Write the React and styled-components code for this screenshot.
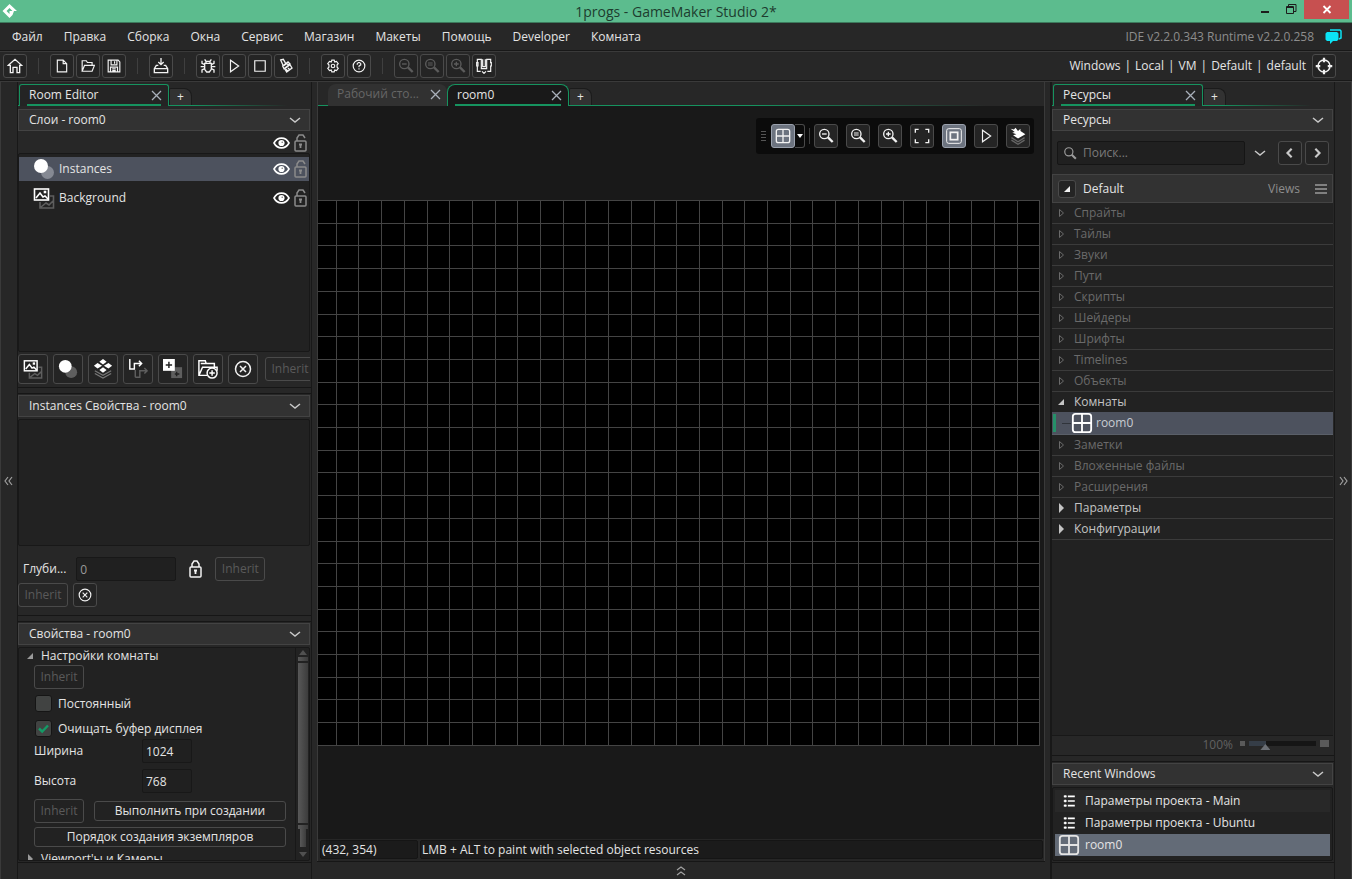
import React, { useState } from "react";
import styled, { createGlobalStyle, css } from "styled-components";

const GlobalStyle = createGlobalStyle`
  * { box-sizing: border-box; }
  html, body, #root { height: 100%; }
  body {
    margin: 0;
    overflow: hidden;
    background: #272727;
    color: #e4e4e4;
    font-family: "Open Sans", "Noto Sans", sans-serif;
    font-size: 12px;
    line-height: 16px;
  }
  button, input { font: inherit; color: inherit; margin: 0; }
  button { padding: 0; background: none; border: 0; }
  ul { margin: 0; padding: 0; list-style: none; }
  a { color: inherit; text-decoration: none; }
`;

const Window = styled.div`
  height: 100vh;
  display: flex;
  flex-direction: column;
`;

/* ---------- title, menu, toolbar ---------- */

const TitleBar = styled.header`
  display: grid;
  grid-template-columns: 1fr auto 1fr;
  height: 23px;
  background: #5cbc8e;
  border-bottom: 1px solid #3c7a5c;
  color: #1d3c2e;
`;
const Logo = styled.div`
  padding: 3px 0 0 2px;
  svg { display: block; }
`;
const WindowTitle = styled.h1`
  margin: 0;
  font-size: 14px;
  font-weight: 400;
  line-height: 23px;
`;
const WindowButtons = styled.div`
  display: flex;
  justify-content: flex-end;
  padding-right: 3px;
`;
const WindowButton = styled.button`
  width: ${(p) => (p.$close ? 45 : 26)}px;
  height: 19px;
  background: ${(p) => (p.$close ? "#c75050" : "transparent")};
  svg { display: block; margin: 0 auto; }
`;

const MenuBar = styled.nav`
  display: flex;
  align-items: center;
  gap: 1px;
  height: 28px;
  padding: 0 10px 0 2px;
  border-bottom: 1px solid #181818;
`;
const MenuItem = styled.button`
  padding: 0 10px;
  height: 26px;
`;
const Spacer = styled.div`
  flex: 1;
`;
const Version = styled.span`
  color: #8d8d8d;
  margin-right: 10px;
`;
const ChatButton = styled.button`
  width: 17px;
  height: 16px;
  svg { display: block; }
`;

const ToolBar = styled.div`
  display: flex;
  align-items: center;
  gap: 2px;
  height: 30px;
  padding: 0 16px 0 3px;
  border-top: 1px solid #3a3a3a;
  border-bottom: 1px solid #181818;
`;
const Divider = styled.span`
  width: 1px;
  height: 16px;
  margin: 0 ${(p) => p.$space ?? 9}px;
  background: #3f3f3f;
`;
const ToolButton = styled.button`
  display: flex;
  align-items: center;
  justify-content: center;
  flex: none;
  width: ${(p) => p.$size || 24}px;
  height: ${(p) => p.$size || 24}px;
  border: 1px solid ${(p) => (p.$on ? "#9aa1ad" : "#4a4a4a")};
  border-radius: 3px;
  background: ${(p) => (p.$on ? "#6c737f" : "#242424")};
  color: ${(p) => (p.disabled ? "#5c5c5c" : "#f2f2f2")};
`;
const Targets = styled.div`
  display: flex;
  gap: 4px;
  margin-right: 4px;
`;

/* ---------- docks ---------- */

const Workspace = styled.main`
  flex: 1;
  min-height: 0;
  display: grid;
  grid-template-columns: 17px 295px minmax(0, 1fr) 284px 17px;
  border-top: 1px solid #3a3a3a;
`;
const Gutter = styled.button`
  display: flex;
  align-items: center;
  justify-content: center;
  border: 0 solid #3a3a3a;
  border-width: ${(p) => (p.$right ? "0 1px 0 0" : "0 0 0 1px")};
  color: #a0a0a0;
`;
const Dock = styled.section`
  display: flex;
  flex-direction: column;
  min-height: 0;
  border: 1px solid #181818;
  border-width: 0 1px;
  padding-bottom: 16px;
`;
const DockBody = styled.div`
  flex: 1;
  min-height: 0;
  display: flex;
  flex-direction: column;
  border-bottom: 1px solid #161616;
`;
const Splitter = styled.div`
  flex: none;
  height: 7px;
  margin-bottom: 1px;
  border: 1px solid #161616;
  border-width: 1px 0;
`;

const TabRow = styled.div`
  display: flex;
  align-items: flex-end;
  flex: none;
  height: 24px;
  padding-left: ${(p) => (p.$center ? 10 : 1)}px;
  margin-bottom: ${(p) => (p.$center ? 0 : 3)}px;
  background: linear-gradient(90deg, #16935f 0, #16935f 60%, transparent 92%) bottom / 100% 1px no-repeat;
`;
const Tab = styled.div`
  display: flex;
  align-items: center;
  justify-content: space-between;
  width: ${(p) => p.$width || 150}px;
  height: 22px;
  padding: 0 6px 2px 9px;
  color: ${(p) => (p.$idle ? "#666" : "#e4e4e4")};
  background: ${(p) => (p.$idle ? "#313131" : p.$dark ? "#191919" : "#242424")};
  border-radius: ${(p) => (p.$dark || p.$idle ? "8px 8px 0 0" : "3px 3px 0 0")};
  ${(p) =>
    !p.$idle &&
    css`
      border: 1px solid #16935f;
      border-bottom: 0;
      background-image: linear-gradient(#16935f, #16935f);
      background-repeat: no-repeat;
      background-size: calc(100% - 14px) 2px;
      background-position: 7px 100%;
    `}
`;
const TabClose = styled.button`
  width: 11px;
  height: 16px;
  color: #a9b0ba;
  svg { display: block; }
`;
const AddTab = styled.button`
  width: 23px;
  height: 17px;
  margin-bottom: 1px;
  border-radius: 2px 8px 0 0;
  background: #323232;
  border: 1px solid #1b1b1b;
  border-bottom: 0;
  line-height: 14px;
`;

const PanelHeader = styled.button`
  flex: none;
  display: flex;
  align-items: center;
  justify-content: space-between;
  width: calc(100% - 1px);
  height: 22px;
  padding: 0 8px 0 10px;
  text-align: left;
  background: #323232;
  border: 1px solid #434343;
  margin-bottom: 2px;
`;
const Box = styled.div`
  margin-right: 1px;
  background: #222;
  border: 1px solid #181818;
  border-radius: 2px;
`;

/* ---------- left dock ---------- */

const Flags = styled.span`
  display: flex;
  align-items: center;
  gap: 4px;
  margin-left: auto;
`;
const LayerHead = styled.div`
  flex: none;
  display: flex;
  height: 20px;
  padding-right: 4px;
`;
const LayerList = styled(Box).attrs({ as: "ul" })`
  flex: 1;
  min-height: 0;
  padding: 3px 0;
  display: flex;
  flex-direction: column;
  gap: 5px;
  margin-bottom: 2px;
`;
const Layer = styled.li`
  display: flex;
  align-items: center;
  height: 24px;
  padding: 0 2px 0 14px;
  gap: 4px;
  background: ${(p) => (p.$selected ? "#4d525e" : "transparent")};
`;
const LayerTools = styled.div`
  flex: none;
  display: flex;
  align-items: center;
  gap: 5px;
  height: 30px;
  margin: 0 1px 3px 0;
  overflow: hidden;
`;
const Inherit = styled.button`
  flex: none;
  width: 50px;
  height: 24px;
  border: 1px solid #4a4a4a;
  border-radius: 3px;
  color: #5a5a5a;
  margin-left: ${(p) => p.$indent || 0}px;
`;
const EmptyBox = styled(Box)`
  flex: none;
  height: 127px;
  margin-bottom: 11px;
`;
const DepthRow = styled.div`
  flex: none;
  display: flex;
  align-items: center;
  padding-left: ${(p) => p.$left}px;
  height: 24px;
  margin-bottom: ${(p) => p.$bottom}px;
  gap: ${(p) => p.$gap}px;
`;
const LockButton = styled.button`
  width: 19px;
  height: 24px;
  svg { display: block; margin: 0 auto; }
`;
const Field = styled.input`
  width: ${(p) => p.$width}px;
  height: 24px;
  padding: 0 3px;
  color: ${(p) => (p.$dim ? "#9a9a9a" : "#e4e4e4")};
  background: #202020;
  border: 1px solid #181818;
  border-radius: 2px;
  outline: 0;
`;
const Settings = styled(Box)`
  flex: none;
  display: flex;
  height: 214px;
  overflow: hidden;
  margin-bottom: 1px;
`;
const SettingsForm = styled.form`
  flex: 1;
  display: flex;
  flex-direction: column;
  padding: 0 9px 0 15px;
  overflow: hidden;
`;
const FoldRow = styled.button`
  flex: none;
  display: flex;
  align-items: center;
  gap: 6px;
  height: 15px;
  margin: 0 0 2px -9px;
  text-align: left;
  svg { color: #9a9a9a; }
`;
const CheckGroup = styled.div`
  flex: none;
  display: flex;
  flex-direction: column;
  gap: 4px;
`;
const CheckRow = styled.label`
  display: flex;
  align-items: center;
  gap: 6px;
  height: 21px;
  padding-left: 1px;
`;
const Checkbox = styled.input`
  appearance: none;
  flex: none;
  width: 17px;
  height: 17px;
  border: 1px solid #151515;
  border-radius: 3px;
  background: #414342;
  &:checked {
    background: #414342 url("data:image/svg+xml,%3Csvg xmlns='http://www.w3.org/2000/svg' viewBox='0 0 15 15'%3E%3Cpath d='M3 7.5l3.2 3L12 4.5' fill='none' stroke='%23149a66' stroke-width='2.4'/%3E%3C/svg%3E") center no-repeat;
  }
`;
const SizeRow = styled.label`
  flex: none;
  display: grid;
  grid-template-columns: 108px auto;
  align-items: center;
  justify-content: start;
  height: 24px;
  margin-bottom: 6px;
`;
const ButtonRow = styled.div`
  flex: none;
  display: flex;
  align-items: center;
  gap: 10px;
  height: 24px;
  margin-bottom: 4px;
`;
const WideButton = styled.button`
  flex: 1 0 auto;
  height: 20px;
  line-height: 16px;
  border: 1px solid #4a4a4a;
  border-radius: 3px;
`;
const OrderRow = styled(ButtonRow)`
  height: 20px;
`;
const ScrollTrack = styled.div`
  flex: none;
  display: flex;
  flex-direction: column;
  align-items: center;
  width: 14px;
  padding: 2px 0;
  gap: 2px;
  border-left: 1px solid #181818;
  color: #505050;
`;
const ScrollThumb = styled.div`
  width: ${(p) => p.$width || 10}px;
  flex: ${(p) => (p.$grow ? "1" : "none")};
  height: ${(p) => p.$height || 4}px;
  background: linear-gradient(90deg, #585858, #3c3c3c);
`;
const ScrollStem = styled.div`
  display: flex;
  flex-direction: column;
  align-items: center;
`;

/* ---------- room canvas ---------- */

const Center = styled.section`
  display: flex;
  flex-direction: column;
  min-width: 0;
  padding: 0 5px 0 5px;
  border-right: 1px solid #181818;
`;
const CenterFrame = styled.div`
  flex: 1;
  min-height: 0;
  display: flex;
  flex-direction: column;
  border: 1px solid #3a3a3a;
  border-width: 0 1px;
`;
const Viewport = styled.div`
  position: relative;
  flex: 1;
  min-height: 0;
  display: flex;
  justify-content: flex-end;
  align-items: flex-start;
  padding: 94px 4px 0 0;
  overflow: hidden;
  background: #191919;
  svg { flex: none; }
`;
const FloatingBar = styled.div`
  position: absolute;
  top: 12px;
  right: 10px;
  display: flex;
  align-items: center;
  gap: 8px;
  height: 36px;
  padding: 0 4px 0 5px;
  border-radius: 3px;
  background: #0b0b0b;
`;
const SplitButton = styled.div`
  display: flex;
  margin: 0 -8px 0 -3px;
  ${Divider} { align-self: center; }
`;
const SplitArrow = styled.button`
  display: flex;
  align-items: center;
  justify-content: center;
  width: 10px;
  height: 24px;
  border: 1px solid #4a4a4a;
  border-left: 0;
  border-radius: 0 3px 3px 0;
`;
const StatusBar = styled.footer`
  flex: none;
  display: flex;
  gap: 2px;
  height: 22px;
  padding: 1px 1px 1px 2px;
  background: #262626;
`;
const StatusCell = styled.div`
  flex: ${(p) => (p.$width ? `0 0 ${p.$width}px` : 1)};
  height: 19px;
  line-height: 17px;
  padding-left: 1px;
  background: #1b1b1b;
  border: 1px solid #151515;
  border-radius: 2px;
`;
const ExpandBar = styled.button`
  flex: none;
  display: flex;
  justify-content: center;
  align-items: center;
  height: 18px;
  border-top: 1px solid #161616;
  color: #a0a0a0;
`;

/* ---------- right dock ---------- */

const SearchRow = styled.div`
  flex: none;
  display: flex;
  align-items: center;
  height: 24px;
  margin: 8px 5px 9px 5px;
  gap: 3px;
`;
const SearchBox = styled.label`
  flex: 1;
  min-width: 0;
  display: flex;
  align-items: center;
  gap: 6px;
  height: 24px;
  padding: 0 5px;
  background: #202020;
  border: 1px solid #151515;
  border-radius: 2px;
  color: #9c9c9c;
  input {
    flex: 1;
    min-width: 0;
    border: 0;
    outline: 0;
    padding: 0;
    background: transparent;
  }
  input::placeholder { color: #7a7a7a; opacity: 1; }
`;
const SearchMore = styled.button`
  width: 24px;
  margin: 0 3px 0 0;
  color: #c8c8c8;
  svg { display: block; margin: 0 auto; }
`;
const ViewHead = styled.div`
  flex: none;
  display: flex;
  align-items: center;
  height: 29px;
  padding: 0 5px;
  border: 1px solid #434343;
  background: #323232;
  span { flex: 1; padding-left: 7px; }
`;
const ViewsButton = styled.button`
  display: flex;
  align-items: center;
  gap: 15px;
  color: #8d8d8d;
`;
const TreeBox = styled.div`
  flex: 1;
  min-height: 0;
  display: flex;
  flex-direction: column;
  margin-right: 1px;
  border-bottom: 1px solid #181818;
  background: #222;
`;
const TreeRow = styled.button`
  display: flex;
  align-items: center;
  gap: 8px;
  width: 100%;
  height: ${(p) => (p.$open ? 20 : 21)}px;
  padding: 0 4px;
  text-align: left;
  color: ${(p) => (p.$live ? "#c4c4c4" : "#6a6a6a")};
  border-bottom: ${(p) => (p.$open ? 0 : 1)}px solid #3b3b3b;
`;
const TreeLeaf = styled.button`
  display: flex;
  align-items: center;
  gap: 3px;
  width: 100%;
  height: 23px;
  padding: 0 0 0 3px;
  color: #c8ccd2;
  background: #4d525e;
  border-bottom: 1px solid #5a5f68;
  svg { color: #fff; }
  i { width: 3px; height: 18px; background: #269069; margin-left: -2px; }
  b { width: 9px; height: 1px; background: #30343b; margin: 0 -3px 0 3px; }
`;
const ZoomRow = styled.label`
  flex: none;
  display: flex;
  align-items: center;
  justify-content: flex-end;
  gap: 4px;
  height: 18px;
  padding-right: 5px;
  margin-bottom: 1px;
  color: #616161;
`;
const ZoomEnd = styled.span`
  width: ${(p) => (p.$big ? 9 : 5)}px;
  height: ${(p) => (p.$big ? 7 : 5)}px;
  margin: 0 0 3px ${(p) => (p.$big ? 0 : 3)}px;
  background: #5a5a5a;
`;
const ZoomSlider = styled.input`
  appearance: none;
  width: 67px;
  height: 12px;
  margin: 0;
  background: linear-gradient(90deg, #353d47 17px, #151515 17px) 0 2px / 100% 5px no-repeat;
  &::-webkit-slider-thumb {
    appearance: none;
    width: 10px;
    height: 6px;
    margin-top: 4px;
    background: #6b6f75;
    clip-path: polygon(50% 0, 100% 100%, 0 100%);
  }
`;
const RecentList = styled(Box).attrs({ as: "ul" })`
  flex: none;
  padding: 2px 2px 4px;
  margin-bottom: 1px;
`;
const Recent = styled.a`
  display: flex;
  align-items: center;
  gap: 5px;
  height: 22px;
  padding-left: 3px;
  background: ${(p) => (p.$selected ? "#636b77" : p.$odd ? "#282828" : "transparent")};
  svg { flex: none; }
`;

/* ---------- drawings ---------- */

const icons = {
  home: <path d="M2 11L12 2l10 9h-3v11h-4v-8H9v8H5V11z" />,
  file: <path d="M4 2h10l6 6v14H4zM14 2v6h6" />,
  folder: <path d="M2 21V3h7l2 3h8v5M2 21l4-10h17l-4 10z" />,
  save: <path d="M2 2h17l3 3v17H2zM7 2v8h10V2M13 4v4M6 22v-8h12v8M9 17h6M9 20h6" />,
  package: <path d="M8 11H5l-3 5v6h20v-6l-3-5h-3M2 16h20M12 0v10M8 6l4 4 4-4" />,
  bug: <path d="M7 8h10v9l-3 4h-4l-3-4zM9 8V5h6v3M7 2l2 3M17 2l-2 3M7 10L3 8V4M17 10l4-2V4M7 13H1M17 13h6M7 16l-4 2v4M17 16l4 2v4" />,
  play: <path d="M6 2v20l14-10z" />,
  stop: <path d="M3 3h18v18H3z" />,
  clean: <path d="M4 3l4-1 4 7-4 3zM7 12l8-6 3 3-9 7zM10 16l8-6 3 5-8 6zM12 17l3 3M15 15l3 3M13 8l3 3" />,
  gear: (
    <>
      <path d="M10 2h4l1 3 3-1 3 4-2 2v4l2 2-3 4-3-1-1 3h-4l-1-3-3 1-3-4 2-2v-4L3 8l3-4 3 1z" />
      <circle cx="12" cy="12" r="3" />
    </>
  ),
  help: (
    <>
      <circle cx="12" cy="12" r="10" />
      <path d="M9 10V8l2-2h2l2 2v2l-3 2v2M12 16v2" />
    </>
  ),
  zoomOut: (
    <>
      <circle cx="9.500" cy="9" r="7" />
      <path d="M6 9h7" />
      <path d="M15 14l7 7" strokeWidth="3.5" />
    </>
  ),
  zoomReset: (
    <>
      <circle cx="9.500" cy="9" r="7" />
      <path d="M6 7.500h7M6 10.500h7" strokeWidth="1.500" />
      <path d="M15 14l7 7" strokeWidth="3.5" />
    </>
  ),
  zoomIn: (
    <>
      <circle cx="9.500" cy="9" r="7" />
      <path d="M6 9h7M9.500 5.500v7" />
      <path d="M15 14l7 7" strokeWidth="3.5" />
    </>
  ),
  search: (
    <>
      <circle cx="10" cy="10" r="7" />
      <path d="M15 15l7 7" strokeWidth="3.5" />
    </>
  ),
  dock: (
    <path d="M2 7V2h6v14h8V2h6v5M2 12v8h5M22 12v8h-5M1 7h2v5H1zM21 7h2v5h-2M10 2v11h4V2M9 20l3 3 3-3" strokeWidth="1.800" />
  ),
  target: (
    <>
      <circle cx="12" cy="12" r="8" />
      <path d="M12 1v6M12 17v6M1 12h6M17 12h6" strokeWidth="3" />
    </>
  ),
  cancel: (
    <>
      <circle cx="12" cy="12" r="10" />
      <path d="M8 8l8 8M16 8l-8 8" />
    </>
  ),
  grid: (
    <>
      <rect x="2" y="2" width="20" height="20" rx="3" />
      <path d="M12 2v20M2 12h20" />
    </>
  ),
  full: <path d="M2 7V2h5M17 2h5v5M22 17v5h-5M7 22H2v-5" />,
  border: (
    <>
      <rect x="1" y="1" width="22" height="22" rx="3" strokeWidth="1.500" />
      <rect x="6.500" y="6.500" width="11" height="11" strokeWidth="2.600" />
    </>
  ),
  list: (
    <>
      <path d="M10 4h12M10 12h12M10 20h12" strokeWidth="3" />
      <path d="M3 4h5M3 12h5M3 20h5M5.500 2v4M5.500 10v4M5.500 18v4" strokeWidth="3" />
    </>
  ),
};

const Icon = ({ name, size = 16, weight = 2 }) => (
  <svg width={size} height={size} viewBox="0 0 24 24" fill="none" stroke="currentColor" strokeWidth={weight} aria-hidden="true">
    {icons[name]}
  </svg>
);

const Chevron = ({ dir = "down", size = 12 }) => {
  const d = { down: "M1 4l5 4 5-4", left: "M8 1L3 6l5 5", right: "M4 1l5 5-5 5" }[dir];
  return (
    <svg width={size} height={size} viewBox="0 0 12 12" fill="none" stroke="#c8c8c8" strokeWidth={dir === "down" ? 1.5 : 2.6} aria-hidden="true">
      <path d={d} />
    </svg>
  );
};

const Double = ({ dir }) => {
  const d = {
    left: "M4 1L1 5l3 4M8 1L5 5l3 4",
    right: "M2 1l3 4-3 4M6 1l3 4-3 4",
    up: "M1 4l4-3 4 3M1 9l4-3 4 3",
  }[dir];
  return (
    <svg width="10" height="10" viewBox="0 0 10 10" fill="none" stroke="currentColor" strokeWidth="1.2" aria-hidden="true">
      <path d={d} />
    </svg>
  );
};

const Cross = () => (
  <svg width="11" height="16" viewBox="0 0 11 16" fill="none" stroke="currentColor" strokeWidth="1.3" aria-hidden="true">
    <path d="M1 4l9 9M10 4l-9 9" />
  </svg>
);

const Fold = ({ kind }) => (
  <svg width="10" height="10" viewBox="0 0 10 10" aria-hidden="true">
    {kind === "open" && <path d="M8 2v6H2z" fill="currentColor" />}
    {kind === "closed" && <path d="M3 0l5 5-5 5z" fill="currentColor" />}
    {kind === "empty" && <path d="M3.500 1.500l4 3.500-4 3.500z" fill="none" stroke="currentColor" />}
  </svg>
);

const Eye = () => (
  <svg width="17" height="14" viewBox="0 0 17 14" aria-label="visible">
    <path d="M1 7c3.500-6.500 11.500-6.500 15 0-3.500 6.500-11.500 6.500-15 0z" fill="none" stroke="#fff" strokeWidth="1.6" />
    <circle cx="8.500" cy="7" r="3.100" fill="#fff" />
    <circle cx="9.200" cy="6.200" r=".8" fill="#777" />
  </svg>
);

const Lock = ({ open }) => (
  <svg width="13" height="18" viewBox="0 0 13 18" fill="none" stroke={open ? "#8b8b8b" : "#f2f2f2"} strokeWidth="1.500" aria-label={open ? "unlocked" : "locked"}>
    <rect x="1" y="7" width="11" height="10" rx="1" />
    <path d={open ? "M3 7V4l2-3h4l2 3" : "M3 7V4l2-3h3l2 3v3"} />
    <path d="M5 10.500h3M6.500 10v4" strokeWidth="1.800" />
  </svg>
);

/* front shape is white, its shadow copy sits lower right */
const LayerIcon = ({ kind, size = 22, shade = "#5e5e5e" }) => (
  <svg width={size} height={size} viewBox="0 0 22 22" fill="none" stroke="#fff" strokeWidth="1.600" aria-hidden="true">
    {kind === "instances" && (
      <>
        <circle cx="14.500" cy="14.500" r="6.500" fill={shade} stroke="none" />
        <circle cx="8" cy="8" r="7" fill="#fff" stroke="none" />
      </>
    )}
    {kind === "background" && (
      <>
        <g stroke={shade}>
          <path d="M17 9h3.500v12H7v-6M8 20l5-4 3 2 4-4" />
        </g>
        <rect x="1.500" y="2" width="14" height="11" />
        <path d="M3 11l4-5 3 4 2-1 3 3" />
        <rect x="11.500" y="4.500" width="1" height="1" />
      </>
    )}
    {kind === "tiles" && (
      <>
        <path d="M2 13l9 5 9-5M2 16l9 5 9-5" stroke="#777" strokeWidth="1.300" />
        <path d="M11 0l4 3-4 3-4-3zM5 4.500l5 3-5 3-4-3zM17 4.500l4 3-4 3-5-3zM11 9l4 3-4 3-4-3z" fill="#fff" stroke="none" />
      </>
    )}
    {kind === "path" && (
      <>
        <path d="M8 20h5v-7h7M18 10l3 3-3 3M8 12v8" stroke={shade} />
        <path d="M2 0v11h5V5h7M12 2l3 3-3 3" />
      </>
    )}
    {kind === "asset" && (
      <>
        <rect x="9" y="9" width="12" height="12" fill={shade} stroke="none" />
        <path d="M15 14v5M13 16.500h5" stroke="#222" />
        <rect x="0" y="0" width="13" height="13" fill="#fff" stroke="none" />
        <path d="M6.500 3v7M3 6.500h7" stroke="#222" />
      </>
    )}
    {kind === "folder" && (
      <>
        <path d="M10 18H1V2h7l1 3h9v4M1 18L5 9h16v4M3 5h6" />
        <circle cx="15.500" cy="15.500" r="5.500" fill="#242424" />
        <path d="M15.500 12.500v6M12.500 15.500h6" />
      </>
    )}
    {kind === "stack" && (
      <>
        <path d="M3 13l8 5 8-5M3 16l8 5 8-5" stroke="#666" />
        <path d="M2 2l4 1 2-2 3 4 3-3v3l6 4-9 5-6-4 4-1-5-2 3-1z" fill="#fff" stroke="none" />
      </>
    )}
  </svg>
);

const CELL = 22.7;

const RoomGrid = ({ cols = 32, rows = 24 }) => {
  const width = Math.round(cols * CELL) + 1;
  const height = Math.round(rows * CELL) + 1;
  const vertical = Array.from({ length: cols + 1 }, (_, i) => Math.round(i * CELL));
  const horizontal = Array.from({ length: rows + 1 }, (_, i) => Math.round(i * CELL));
  return (
    <svg width={width} height={height} role="img" aria-label="room0" shapeRendering="crispEdges">
      <rect width={width} height={height} fill="#000" />
      {vertical.map((x) => (
        <rect key={`v${x}`} x={x} width="1" height={height} fill="#444" />
      ))}
      {horizontal.map((y) => (
        <rect key={`h${y}`} y={y} width={width} height="1" fill="#444" />
      ))}
    </svg>
  );
};

/* ---------- data ---------- */

const menus = ["Файл", "Правка", "Сборка", "Окна", "Сервис", "Магазин", "Макеты", "Помощь", "Developer", "Комната"];

const toolGroups = [
  ["home"],
  ["file", "folder", "save"],
  ["package"],
  ["bug", "play", "stop", "clean"],
  ["gear", "help"],
  ["zoomOut", "zoomReset", "zoomIn", "dock"],
];

const iconSizes = { file: 14, folder: 14, save: 14, play: 14, stop: 14, gear: 14, help: 14 };

const targets = ["Windows", "|", "Local", "|", "VM", "|", "Default", "|", "default"];

const layers = [
  { name: "Instances", kind: "instances" },
  { name: "Background", kind: "background" },
];

const resources = [
  { name: "Спрайты" },
  { name: "Тайлы" },
  { name: "Звуки" },
  { name: "Пути" },
  { name: "Скрипты" },
  { name: "Шейдеры" },
  { name: "Шрифты" },
  { name: "Timelines" },
  { name: "Объекты" },
  { name: "Комнаты", live: true, children: ["room0"] },
  { name: "Заметки" },
  { name: "Вложенные файлы" },
  { name: "Расширения" },
  { name: "Параметры", live: true },
  { name: "Конфигурации", live: true },
];

const recent = [
  { name: "Параметры проекта - Main", icon: "list" },
  { name: "Параметры проекта - Ubuntu", icon: "list" },
  { name: "room0", icon: "grid" },
];

const Header = ({ children }) => (
  <PanelHeader>
    {children}
    <Chevron />
  </PanelHeader>
);

const DockTab = ({ children, ...rest }) => (
  <Tab {...rest}>
    <span>{children}</span>
    <TabClose aria-label="close">
      <Cross />
    </TabClose>
  </Tab>
);

const LayerFlags = () => (
  <Flags>
    <Eye />
    <Lock open />
  </Flags>
);

function RoomEditor() {
  const [layer, setLayer] = useState("Instances");
  const [persistent, setPersistent] = useState(false);
  const [clearBuffer, setClearBuffer] = useState(true);

  return (
    <Dock>
      <DockBody>
        <TabRow>
          <DockTab>Room Editor</DockTab>
          <AddTab>+</AddTab>
        </TabRow>
        <Header>Слои - room0</Header>
        <LayerHead>
          <LayerFlags />
        </LayerHead>
        <LayerList>
          {layers.map((l) => (
            <Layer key={l.name} $selected={l.name === layer} onClick={() => setLayer(l.name)}>
              <LayerIcon kind={l.kind} shade={l.name === layer ? "#858993" : "#5e5e5e"} />
              <span>{l.name}</span>
              <LayerFlags />
            </Layer>
          ))}
        </LayerList>
        <LayerTools>
          {["background", "instances", "tiles", "path", "asset", "folder"].map((kind) => (
            <ToolButton key={kind} $size={30} aria-label={kind}>
              <LayerIcon kind={kind} size={20} />
            </ToolButton>
          ))}
          <ToolButton $size={30} aria-label="delete">
            <Icon name="cancel" size={18} />
          </ToolButton>
          <Inherit $indent={2}>Inherit</Inherit>
        </LayerTools>
        <Splitter />

        <Header>Instances Свойства - room0</Header>
        <EmptyBox />
        <DepthRow $left={5} $gap={10} $bottom={2}>
          <label htmlFor="depth">Глуби...</label>
          <Field id="depth" $width={100} $dim defaultValue="0" />
          <LockButton aria-label="lock depth">
            <Lock />
          </LockButton>
          <Inherit>Inherit</Inherit>
        </DepthRow>
        <DepthRow $left={0} $gap={5} $bottom={8}>
          <Inherit>Inherit</Inherit>
          <ToolButton aria-label="clear">
            <Icon name="cancel" size={14} />
          </ToolButton>
        </DepthRow>
        <Splitter />

        <Header>Свойства - room0</Header>
        <Settings>
          <SettingsForm onSubmit={(e) => e.preventDefault()}>
            <FoldRow type="button">
              <Fold kind="open" />
              Настройки комнаты
            </FoldRow>
            <ButtonRow>
              <Inherit type="button">Inherit</Inherit>
            </ButtonRow>
            <CheckGroup>
              <CheckRow>
                <Checkbox type="checkbox" checked={persistent} onChange={(e) => setPersistent(e.target.checked)} />
                Постоянный
              </CheckRow>
              <CheckRow>
                <Checkbox type="checkbox" checked={clearBuffer} onChange={(e) => setClearBuffer(e.target.checked)} />
                Очищать буфер дисплея
              </CheckRow>
            </CheckGroup>
            <SizeRow>
              Ширина
              <Field $width={50} defaultValue="1024" />
            </SizeRow>
            <SizeRow>
              Высота
              <Field $width={50} defaultValue="768" />
            </SizeRow>
            <ButtonRow>
              <Inherit type="button">Inherit</Inherit>
              <WideButton type="button">Выполнить при создании</WideButton>
            </ButtonRow>
            <OrderRow>
              <WideButton type="button">Порядок создания экземпляров</WideButton>
            </OrderRow>
            <FoldRow type="button">
              <Fold kind="closed" />
              Viewport'ы и Камеры
            </FoldRow>
          </SettingsForm>
          <ScrollTrack aria-hidden="true">
            <svg width="8" height="5"><path d="M4 0l4 5H0z" fill="currentColor" /></svg>
            <ScrollThumb />
            <ScrollThumb $grow />
            <ScrollStem>
              <ScrollThumb />
              <ScrollThumb $width={6} $height={18} />
            </ScrollStem>
            <svg width="8" height="9"><path d="M4 8l4-5H0z" fill="currentColor" /></svg>
          </ScrollTrack>
        </Settings>
      </DockBody>
    </Dock>
  );
}

function RoomView() {
  return (
    <Center>
      <CenterFrame>
        <TabRow $center>
          <DockTab $idle $width={119}>Рабочий сто...</DockTab>
          <DockTab $dark $width={122}>room0</DockTab>
          <AddTab>+</AddTab>
        </TabRow>
        <Viewport>
          <RoomGrid />
          <FloatingBar>
            <svg width="5" height="12" stroke="#555" aria-hidden="true">
              <path d="M0 1.500h5M0 4.500h5M0 7.500h5M0 10.500h5" />
            </svg>
            <SplitButton>
              <ToolButton $on aria-label="grid">
                <Icon name="grid" />
              </ToolButton>
              <SplitArrow aria-label="grid options">
                <svg width="6" height="4"><path d="M0 0h6L3 4z" fill="#fff" /></svg>
              </SplitArrow>
              <Divider $space={4} />
            </SplitButton>
            {["zoomOut", "zoomReset", "zoomIn", "full"].map((name) => (
              <ToolButton key={name} aria-label={name}>
                <Icon name={name} />
              </ToolButton>
            ))}
            <ToolButton $on aria-label="border">
              <Icon name="border" />
            </ToolButton>
            <ToolButton aria-label="play">
              <Icon name="play" size={14} />
            </ToolButton>
            <ToolButton aria-label="layers">
              <LayerIcon kind="stack" size={18} />
            </ToolButton>
          </FloatingBar>
        </Viewport>
        <StatusBar>
          <StatusCell $width={98}>(432, 354)</StatusCell>
          <StatusCell>LMB + ALT to paint with selected object resources</StatusCell>
        </StatusBar>
      </CenterFrame>
      <ExpandBar aria-label="expand">
        <Double dir="up" />
      </ExpandBar>
    </Center>
  );
}

function Resources() {
  const [query, setQuery] = useState("");

  return (
    <Dock>
      <DockBody>
        <TabRow>
          <DockTab>Ресурсы</DockTab>
          <AddTab>+</AddTab>
        </TabRow>
        <Header>Ресурсы</Header>
        <SearchRow>
          <SearchBox>
            <Icon name="search" size={14} />
            <input aria-label="search" placeholder="Поиск..." value={query} onChange={(e) => setQuery(e.target.value)} />
          </SearchBox>
          <SearchMore aria-label="search options">
            <Chevron />
          </SearchMore>
          <ToolButton aria-label="previous">
            <Chevron dir="left" size={10} />
          </ToolButton>
          <ToolButton aria-label="next">
            <Chevron dir="right" size={10} />
          </ToolButton>
        </SearchRow>
        <TreeBox>
          <ViewHead>
            <ToolButton $size={18} aria-label="collapse">
              <Fold kind="open" />
            </ToolButton>
            <span>Default</span>
            <ViewsButton>
              Views
              <svg width="12" height="10" stroke="#9a9a9a" strokeWidth="1.500" aria-hidden="true">
                <path d="M0 1h12M0 5h12M0 9h12" />
              </svg>
            </ViewsButton>
          </ViewHead>
          <ul>
            {resources.map((r) => (
              <li key={r.name}>
                <TreeRow $live={r.live} $open={!!r.children}>
                  <Fold kind={r.children ? "open" : r.live ? "closed" : "empty"} />
                  {r.name}
                </TreeRow>
                {r.children?.map((c) => (
                  <TreeLeaf key={c}>
                    <i />
                    <b />
                    <Icon name="grid" size={22} />
                    {c}
                  </TreeLeaf>
                ))}
              </li>
            ))}
          </ul>
        </TreeBox>
        <ZoomRow>
          100%
          <ZoomEnd />
          <ZoomSlider type="range" min="0" max="100" defaultValue="20" />
          <ZoomEnd $big />
        </ZoomRow>
        <Splitter />
        <Header>Recent Windows</Header>
        <RecentList>
          {recent.map((r, i) => (
            <li key={r.name}>
              <Recent href="#" $odd={i === 0} $selected={r.icon === "grid"}>
                {r.icon === "grid" ? (
                  <Icon name="grid" size={22} />
                ) : (
                  <svg width="22" height="14" viewBox="-7 0 38 24" fill="none" stroke="#fff" aria-hidden="true">
                    {icons.list}
                  </svg>
                )}
                {r.name}
              </Recent>
            </li>
          ))}
        </RecentList>
      </DockBody>
    </Dock>
  );
}

export default function App() {
  return (
    <Window>
      <GlobalStyle />
      <TitleBar>
        <Logo>
          <svg width="16" height="16" viewBox="0 0 16 16" aria-hidden="true">
            <path d="M7.500 1L15 8h-4.500L7.500 5 4.500 8l3 3V8H12l-1.500 4-3 3L.5 8z" fill="#fff" />
          </svg>
        </Logo>
        <WindowTitle>1progs - GameMaker Studio 2*</WindowTitle>
        <WindowButtons>
          <WindowButton aria-label="minimize">
            <svg width="10" height="19"><path d="M1 11h8v2H1z" fill="#1c1c1c" /></svg>
          </WindowButton>
          <WindowButton aria-label="restore">
            <svg width="11" height="19" fill="none" stroke="#1c1c1c"><path d="M.5 6.500h7v7h-7zM.5 7.500h7M2.500 6V4.500h7.500v7H8" /></svg>
          </WindowButton>
          <WindowButton $close aria-label="close">
            <svg width="10" height="19" fill="none" stroke="#fff" strokeWidth="1.800"><path d="M1.500 6l7 7M8.500 6l-7 7" /></svg>
          </WindowButton>
        </WindowButtons>
      </TitleBar>

      <MenuBar>
        {menus.map((m) => (
          <MenuItem key={m}>{m}</MenuItem>
        ))}
        <Spacer />
        <Version>IDE v2.2.0.343 Runtime v2.2.0.258</Version>
        <ChatButton aria-label="news">
          <svg width="17" height="16" viewBox="0 0 17 16" aria-hidden="true">
            <path d="M5 1h10l1 1v7l-2 1" fill="none" stroke="#0be3f5" strokeWidth="1.500" />
            <path d="M2 3h10l1.500 1.500v6L12 12H8l-3 3v-3H2L.5 10.500v-6z" fill="#0be3f5" />
          </svg>
        </ChatButton>
      </MenuBar>

      <ToolBar>
        {toolGroups.map((group, i) => (
          <React.Fragment key={group[0]}>
            {i > 0 && <Divider />}
            {group.map((name) => (
              <ToolButton key={name} aria-label={name} disabled={name.startsWith("zoom")}>
                <Icon name={name} size={iconSizes[name] || 16} />
              </ToolButton>
            ))}
          </React.Fragment>
        ))}
        <Spacer />
        <Targets>
          {targets.map((t, i) => (
            <span key={i}>{t}</span>
          ))}
        </Targets>
        <ToolButton aria-label="targets">
          <Icon name="target" size={18} />
        </ToolButton>
      </ToolBar>

      <Workspace>
        <Gutter aria-label="hide left dock">
          <Double dir="left" />
        </Gutter>
        <RoomEditor />
        <RoomView />
        <Resources />
        <Gutter $right aria-label="hide right dock">
          <Double dir="right" />
        </Gutter>
      </Workspace>
    </Window>
  );
}
